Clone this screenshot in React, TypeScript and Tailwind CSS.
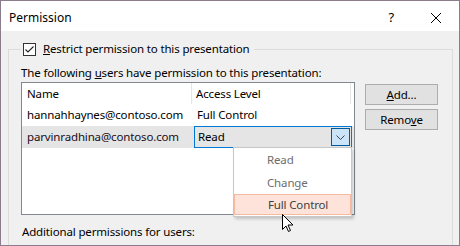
import React from "react";

const font = { fontFamily: '"Noto Sans", "Segoe UI", sans-serif' };

export default function App() {
  return (
    <div
      className="w-[460px] h-[246px] border border-[#8d7c8d] bg-[#f0f0f0] flex flex-col overflow-hidden text-[11.5px] tracking-[-0.15px] text-black relative"
      style={font}
    >
      {/* Title bar */}
      <div className="h-[30px] bg-white flex items-center shrink-0 pt-[3px]">
        <span className="ml-[8px] leading-none text-[12px] tracking-normal">Permission</span>
        <span className="ml-auto mr-[36px] text-[13px] leading-none">?</span>
        <svg width="12" height="12" viewBox="0 0 12 12" className="mr-[17px]">
          <path d="M1 1 L11 11 M11 1 L1 11" stroke="#000" strokeWidth="1" fill="none" />
        </svg>
      </div>

      {/* Body */}
      <div className="flex-1 pt-[18px] pl-[7px] pr-[6px]">
        <div className="border border-[#dcdcdc] h-[220px] pl-[12px]">
          <div className="-mt-[9px] flex">
            <span className="bg-[#f0f0f0] flex items-center pl-[2px] pr-[4px] h-[16px]">
              <span className="w-[13px] h-[13px] border border-[#333] bg-white flex items-center justify-center mr-[7px]">
                <svg width="11" height="11" viewBox="0 0 11 11">
                  <path d="M1.5 5.5 L4 8 L9.5 2.5" stroke="#222" strokeWidth="1.1" fill="none" />
                </svg>
              </span>
              <span>
                <span className="underline">R</span>estrict permission to this presentation
              </span>
            </span>
          </div>

          <div className="mt-[8px] leading-[16px]">
            The following <span className="underline">u</span>sers have permission to this presentation:
          </div>

          <div className="flex mt-[1px]">
            {/* List */}
            <div className="w-[334px] h-[133px] border border-[#828790] bg-white flex flex-col">
              <div className="h-[21px] flex items-stretch">
                <div className="w-[170px] pl-[5px] flex items-center border-r border-[#e5e5e5]">Name</div>
                <div className="flex-1 pl-[4px] flex items-center border-r border-[#e5e5e5] mr-[3px]">Access Level</div>
              </div>
              <div className="h-[22px] flex items-center">
                <div className="w-[171px] pl-[5px]">hannahhaynes@contoso.com</div>
                <div className="pl-[4px]">Full Control</div>
              </div>
              <div className="h-[22px] flex items-center bg-[#e5e5e5] relative">
                <div className="w-[172px] pl-[5px] text-[#1a0d1a]">parvinradhina@contoso.com</div>
                <div className="w-[158px] h-[22px] border border-[#0078d7] flex items-center pl-[3px]">
                  <span className="flex-1">Read</span>
                  <span className="w-[19px] h-[18px] mr-[1px] border border-[#005a9e] bg-[#cce4f7] flex items-center justify-center">
                    <svg width="9" height="5" viewBox="0 0 9 5">
                      <path d="M0.5 0.5 L4.5 4.5 L8.5 0.5" stroke="#444" strokeWidth="1" fill="none" />
                    </svg>
                  </span>
                </div>
                {/* dropdown popup */}
                <div className="absolute left-[211px] top-[21px] w-[119px] h-[70px] bg-white border border-[#c8c8c8] shadow-[2px_2px_3px_rgba(0,0,0,0.2)] flex flex-col pt-[1px] z-10">
                  <div className="h-[22px] flex items-center pl-[33px] text-[#6d6d6d]">Read</div>
                  <div className="h-[23px] flex items-center pl-[33px] text-[#6d6d6d]">Change</div>
                  <div className="h-[21px] flex items-center pl-[33px] bg-[#fde3da] border border-[#f6b9a2] text-[#404040]">Full Control</div>
                </div>
              </div>
            </div>

            {/* Buttons */}
            <div className="ml-[10px] flex flex-col gap-[4px] pt-[2px]">
              <button className="w-[73px] h-[21px] bg-[#e1e1e1] border border-[#adadad] flex items-center justify-center">
                <span><span className="underline">A</span>dd...</span>
              </button>
              <button className="w-[73px] h-[21px] bg-[#e1e1e1] border border-[#adadad] flex items-center justify-center">
                <span>Remo<span className="underline">v</span>e</span>
              </button>
            </div>
          </div>

          <div className="mt-[9px] leading-[16px] pl-[1px]">Additional permissions for users:</div>
        </div>
      </div>

      {/* mouse cursor */}
      <svg className="absolute left-[281px] top-[213px] z-20" width="12" height="19" viewBox="0 0 12 19">
        <path d="M0.5 0.5 L0.5 15.5 L4 12 L6.5 17.5 L8.5 16.5 L6 11 L11 11 Z" fill="#fff" stroke="#000" strokeWidth="1" />
      </svg>
    </div>
  );
}
